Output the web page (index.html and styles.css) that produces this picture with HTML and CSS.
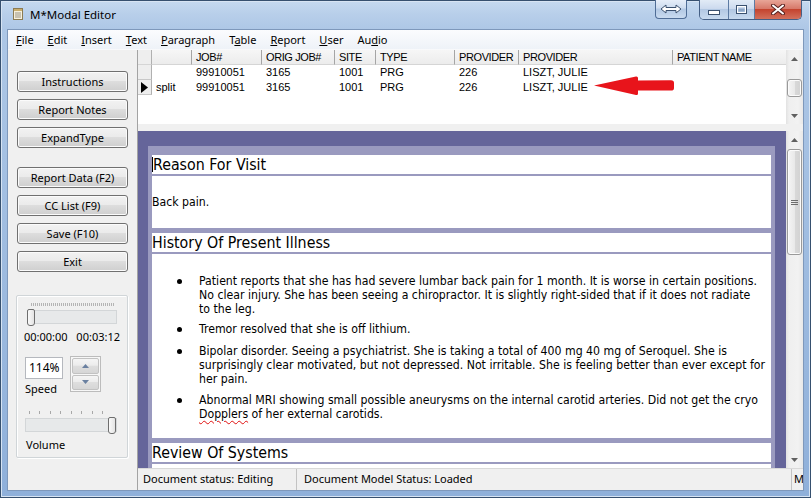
FILE: index.html
```html
<!DOCTYPE html>
<html>
<head>
<meta charset="utf-8">
<title>M*Modal Editor</title>
<link rel="stylesheet" href="styles.css">
</head>
<body>
<div class="window">
  <div class="titlebar">
    <svg class="app-icon" width="10" height="12" viewBox="0 0 10 12">
      <rect x="0.5" y="0.5" width="9" height="11" fill="#f6f0dc" stroke="#8c7b52"/>
      <rect x="1" y="1" width="8" height="2" fill="#c9ae6e"/>
      <path d="M2 5h6M2 7h6M2 9h6" stroke="#9a9486" stroke-width="1"/>
    </svg>
    <span class="title">M*Modal Editor</span>
    <span class="tb-fill"></span>
    <div class="cap-expand">
      <svg width="22" height="10" viewBox="0 0 22 10"><polygon points="1,5 6,1 6,3.5 16,3.5 16,1 21,5 16,9 16,6.5 6,6.5 6,9" fill="#fff" stroke="#3b516f" stroke-width="1"/></svg>
    </div>
    <div class="cap-group">
      <div class="cap cap-min"><svg width="12" height="5" viewBox="0 0 12 5"><rect x="0.5" y="0.5" width="11" height="4" fill="#fff" stroke="#3b516f"/></svg></div>
      <div class="cap cap-max"><svg width="11" height="9" viewBox="0 0 11 9"><rect x="0.5" y="0.5" width="10" height="8" fill="none" stroke="#3b516f"/><rect x="1.5" y="1.5" width="8" height="6" fill="none" stroke="#fff"/><rect x="2.5" y="3.5" width="6" height="3" fill="#8da6c6"/></svg></div>
      <div class="cap cap-close"><svg width="14" height="11" viewBox="0 0 14 11"><path d="M2 1.5L12 9.5M12 1.5L2 9.5" stroke="#5a2320" stroke-width="4" stroke-linecap="round"/><path d="M2 1.5L12 9.5M12 1.5L2 9.5" stroke="#fff" stroke-width="2" stroke-linecap="round"/></svg></div>
    </div>
  </div>

  <div class="client">
    <nav class="menubar">
      <span><u>F</u>ile</span>
      <span><u>E</u>dit</span>
      <span><u>I</u>nsert</span>
      <span><u>T</u>ext</span>
      <span><u>P</u>aragraph</span>
      <span>T<u>a</u>ble</span>
      <span><u>R</u>eport</span>
      <span><u>U</u>ser</span>
      <span>Au<u>d</u>io</span>
    </nav>

    <div class="main">
      <aside class="leftpanel">
        <div class="btn-stack">
          <div class="btn">Instructions</div>
          <div class="btn">Report Notes</div>
          <div class="btn">ExpandType</div>
        </div>
        <div class="btn-stack second">
          <div class="btn">Report Data (F2)</div>
          <div class="btn">CC List (F9)</div>
          <div class="btn">Save (F10)</div>
          <div class="btn">Exit</div>
        </div>
        <div class="group">
          <div class="seek">
            <div class="ticks dense"></div>
            <div class="track"><span class="thumb thumb-left"></span></div>
          </div>
          <div class="times"><span>00:00:00</span><span>00:03:12</span></div>
          <div class="speed-row">
            <div class="speed-col">
              <div class="pct">114%</div>
              <div class="lbl">Speed</div>
            </div>
            <div class="spin">
              <div class="spin-btn"><svg width="7" height="4" viewBox="0 0 7 4"><polygon points="0,4 3.5,0 7,4" fill="#6a80a0"/></svg></div>
              <div class="spin-btn"><svg width="7" height="4" viewBox="0 0 7 4"><polygon points="0,0 7,0 3.5,4" fill="#6a80a0"/></svg></div>
            </div>
          </div>
          <div class="vol">
            <div class="ticks sparse"></div>
            <div class="track"><span class="thumb thumb-right"></span></div>
            <div class="lbl vol-lbl">Volume</div>
          </div>
        </div>
      </aside>

      <section class="rightpane">
        <div class="grid-area">
          <div class="grid">
            <div class="rh hdr"></div>
            <div class="hc"></div>
            <div class="hc">JOB#</div>
            <div class="hc">ORIG JOB#</div>
            <div class="hc">SITE</div>
            <div class="hc">TYPE</div>
            <div class="hc">PROVIDER</div>
            <div class="hc">PROVIDER</div>
            <div class="hc last">PATIENT NAME</div>

            <div class="rh"></div>
            <div class="dc"></div>
            <div class="dc">99910051</div>
            <div class="dc">3165</div>
            <div class="dc">1001</div>
            <div class="dc">PRG</div>
            <div class="dc">226</div>
            <div class="dc">LISZT, JULIE</div>
            <div class="dc"></div>

            <div class="rh cur"><svg width="7" height="11" viewBox="0 0 7 11"><polygon points="0,0 7,5.5 0,11" fill="#000"/></svg></div>
            <div class="dc">split</div>
            <div class="dc">99910051</div>
            <div class="dc">3165</div>
            <div class="dc">1001</div>
            <div class="dc">PRG</div>
            <div class="dc">226</div>
            <div class="dc">LISZT, JULIE</div>
            <div class="dc"></div>
          </div>
          <div class="vscroll vs-grid">
            <div class="sb-btn"><svg width="7" height="4" viewBox="0 0 7 4"><polygon points="0,4 3.5,0 7,4" fill="#606060"/></svg></div>
            <div class="sb-thumb short"></div>
            <div class="sb-fill"></div>
            <div class="sb-btn"><svg width="7" height="4" viewBox="0 0 7 4"><polygon points="0,0 7,0 3.5,4" fill="#606060"/></svg></div>
          </div>
        </div>

        <div class="splitter"></div>

        <div class="doc-area">
          <div class="doc-view">
            <div class="doc-col">
              <div class="sec-head"><span class="caret"></span>Reason For Visit</div>
              <div class="sec-body"><p class="para">Back pain.</p></div>

              <div class="sec-head">History Of Present Illness</div>
              <div class="sec-body list-body">
                <ul class="bullets">
                  <li><span class="li-text">Patient reports that she has had severe lumbar back pain for 1 month. It is worse in certain positions.<br>No clear injury. She has been seeing a chiropractor. It is slightly right-sided that if it does not radiate<br>to the leg.</span></li>
                  <li><span class="li-text">Tremor resolved that she is off lithium.</span></li>
                  <li class="gap8"><span class="li-text">Bipolar disorder. Seeing a psychiatrist. She is taking a total of 400 mg 40 mg of Seroquel. She is<br>surprisingly clear motivated, but not depressed. Not irritable. She is feeling better than ever except for<br>her pain.</span></li>
                  <li><span class="li-text">Abnormal MRI showing small possible aneurysms on the internal carotid arteries. Did not get the cryo<br><span class="spell">Dopplers</span> of her external carotids.</span></li>
                </ul>
              </div>

              <div class="sec-head">Review Of Systems</div>
              <div class="sec-body tail"></div>
            </div>
          </div>
          <div class="vscroll vs-doc">
            <div class="sb-btn"><svg width="7" height="4" viewBox="0 0 7 4"><polygon points="0,4 3.5,0 7,4" fill="#606060"/></svg></div>
            <div class="sb-thumb long"><span class="grip"></span></div>
            <div class="sb-fill"></div>
            <div class="sb-btn"><svg width="7" height="4" viewBox="0 0 7 4"><polygon points="0,0 7,0 3.5,4" fill="#606060"/></svg></div>
          </div>
        </div>

        <div class="statusbar">
          <div class="st st1">Document status: Editing</div>
          <div class="st st2">Document Model Status: Loaded</div>
          <div class="st st3">M</div>
        </div>
      </section>
    </div>
  </div>

  <svg class="red-arrow" width="84" height="24" viewBox="0 0 84 24">
    <path d="M2 11.5 L44 2.5 Q46 2.2 46 4 L46 6.5 L79 6.2 Q82 6.2 82 9 L82 14 Q82 16.6 79 16.6 L46 16.4 L46 19.5 Q46 21.5 44 21 Z" fill="#e8141b"/>
  </svg>
</div>
</body>
</html>
```

FILE: styles.css
```css
* { box-sizing: border-box; }

html, body {
  margin: 0;
  padding: 0;
}

body {
  width: 811px;
  height: 498px;
  overflow: hidden;
  font-family: "Noto Sans", "DejaVu Sans", sans-serif;
  font-size: 11px;
  color: #000;
  background: #fff;
}

/* ---------- window frame ---------- */
.window {
  position: relative;
  width: 811px;
  height: 498px;
  display: flex;
  flex-direction: column;
  padding: 0 8px 8px 8px;
  background: linear-gradient(to bottom, #c6daf0 0px, #b8cfea 14px, #adc7e6 30px, #8fb0da 100%);
  box-shadow: inset 0 0 0 1px #36506f, inset 0 0 0 2px #d7e4f3;
}

.titlebar {
  height: 30px;
  display: flex;
  align-items: flex-start;
  padding-left: 5px;
}

.app-icon {
  margin-top: 8px;
  flex: none;
}

.title {
  margin-left: 7px;
  line-height: 30px;
  font-size: 11.5px;
  color: #000;
  white-space: nowrap;
}

.tb-fill { flex: 1; }

.cap-expand {
  width: 32px;
  height: 19px;
  border: 1px solid #4f6d96;
  border-top: none;
  border-radius: 0 0 4px 4px;
  background: linear-gradient(to bottom, #e6eef9 0%, #cddcef 45%, #b2c8e4 50%, #c9dbf0 100%);
  display: flex;
  align-items: center;
  justify-content: center;
}

.cap-group {
  margin-left: 12px;
  margin-right: 1px;
  height: 20px;
  display: flex;
  border: 1px solid #445f85;
  border-top: none;
  border-radius: 0 0 5px 5px;
  overflow: hidden;
}

.cap {
  height: 100%;
  display: flex;
  align-items: center;
  justify-content: center;
}

.cap-min {
  width: 29px;
  align-items: flex-end;
  padding-bottom: 4px;
  border-right: 1px solid #5d7ba3;
  background: linear-gradient(to bottom, #e2ebf6 0%, #ccdaee 45%, #b3c8e3 50%, #c8daef 100%);
}

.cap-max {
  width: 26px;
  border-right: 1px solid #5d7ba3;
  background: linear-gradient(to bottom, #e2ebf6 0%, #ccdaee 45%, #b3c8e3 50%, #c8daef 100%);
}

.cap-close {
  width: 46px;
  background: linear-gradient(to bottom, #e8a597 0%, #d7796a 45%, #c4442f 50%, #d2705c 100%);
}

/* ---------- client ---------- */
.client {
  flex: 1;
  display: flex;
  flex-direction: column;
  background: #f0f0f0;
  min-height: 0;
  box-shadow: 0 0 0 1px #7e98bb;
}

.menubar {
  height: 20px;
  display: flex;
  gap: 14px;
  padding-left: 8px;
  line-height: 20px;
  font-size: 11px;
  background: linear-gradient(to bottom, #fbfcfe, #eef2f8);
  border-bottom: 1px solid #f8f9fb;
}

.menubar u {
  text-decoration: underline;
  text-underline-offset: 1px;
}

.main {
  flex: 1;
  display: flex;
  min-height: 0;
}

/* ---------- left panel ---------- */
.leftpanel {
  width: 130px;
  flex: none;
  display: flex;
  flex-direction: column;
  padding: 21px 0 0 9px;
  border-right: 1px solid #a3a3a3;
  background: #f0f0f0;
}

.btn-stack {
  display: flex;
  flex-direction: column;
  gap: 7px;
}

.btn-stack.second {
  margin-top: 19px;
}

.btn {
  width: 111px;
  height: 21px;
  border: 1px solid #707070;
  border-radius: 3px;
  background: linear-gradient(to bottom, #f2f2f2 0%, #ebebeb 45%, #dddddd 50%, #cfcfcf 100%);
  box-shadow: inset 0 0 0 1px #fbfbfb;
  text-align: center;
  line-height: 19px;
  font-size: 11px;
  white-space: nowrap;
}

.group {
  margin: 23px 0 0 -1px;
  width: 112px;
  height: 163px;
  border: 1px solid #d0d5d8;
  border-radius: 2px;
  box-shadow: inset 1px 1px 0 #fff, 1px 1px 0 #fff;
}

.seek {
  margin: 7px 0 0 10px;
  width: 90px;
}

.ticks {
  height: 3px;
  margin: 0 3px 0 4px;
}

.ticks.dense {
  background: repeating-linear-gradient(to right, #b4b4b4 0 1px, transparent 1px 2px);
}

.ticks.sparse {
  margin: 0 4px 0 4px;
  background: repeating-linear-gradient(to right, #a8a8a8 0 1px, transparent 1px 10.5px);
}

.track {
  position: relative;
  margin-top: 4px;
  height: 14px;
  background: #e7e9ea;
  border: 1px solid #d3d6d8;
}

.thumb {
  position: absolute;
  top: -2px;
  width: 8px;
  height: 17px;
  border: 1px solid #6e6e6e;
  border-radius: 2px 2px 3px 3px;
  background: linear-gradient(to right, #fafafa, #e3e3e3);
}

.thumb-left { left: -1px; }
.thumb-right { left: 82px; }

.times {
  margin: 6px 0 0 7px;
  width: 96px;
  display: flex;
  justify-content: space-between;
  line-height: 14px;
  font-size: 11px;
}

.speed-row {
  display: flex;
  margin: 12px 0 0 8px;
}

.speed-col {
  margin-top: 1px;
}

.pct {
  width: 38px;
  height: 22px;
  border: 1px solid #b5b8be;
  background: #fff;
  padding-left: 3px;
  line-height: 20px;
  font-size: 12px;
}

.lbl {
  line-height: 14px;
  margin-top: 3px;
  font-size: 11px;
}

.spin {
  margin-left: 7px;
  width: 31px;
  height: 36px;
  display: flex;
  flex-direction: column;
  border: 1px solid #bcbcbc;
  background: #f7f7f7;
  padding: 1px;
  gap: 1px;
}

.spin-btn {
  flex: 1;
  display: flex;
  align-items: center;
  justify-content: center;
  border: 1px solid #c2c2c2;
  border-radius: 2px;
  background: linear-gradient(to bottom, #f5f5f5 0%, #ececec 45%, #dedede 50%, #d6d6d6 100%);
}

.vol {
  margin: 15px 0 0 8px;
  width: 92px;
}

.vol-lbl {
  margin: 6px 0 0 1px;
}

/* ---------- right pane ---------- */
.rightpane {
  flex: 1;
  display: flex;
  flex-direction: column;
  min-width: 0;
}

.grid-area {
  height: 74px;
  display: flex;
  background: #fff;
}

.grid {
  flex: 1;
  display: grid;
  grid-template-columns: 14px 40px 70px 73px 41px 79px 64px 154px 113px;
  grid-auto-rows: 15px;
  align-content: start;
  font-family: "Liberation Sans", Arial, sans-serif;
  font-size: 11px;
  line-height: 15px;
}

.hc {
  background: linear-gradient(to bottom, #f6f6f6, #ececec);
  border-right: 1px solid #a5a5a5;
  border-bottom: 1px solid #d5d5d5;
  padding-left: 4px;
  letter-spacing: -0.4px;
  white-space: nowrap;
  overflow: hidden;
}

.hc.last { border-right: none; }

.rh {
  background: #eeeeee;
  border-right: 1px solid #b0b0b0;
  border-bottom: 1px solid #c8c8c8;
  display: flex;
  align-items: center;
  justify-content: center;
}

.rh.hdr { border-bottom: 1px solid #d5d5d5; }

.dc {
  padding-left: 4px;
  white-space: nowrap;
  overflow: hidden;
}

.vscroll {
  width: 17px;
  flex: none;
  display: flex;
  flex-direction: column;
  background: linear-gradient(to right, #e2e2e2 0, #efefef 3px, #f2f2f2 12px, #e8e8e8 17px);
}

.sb-btn {
  height: 17px;
  flex: none;
  display: flex;
  align-items: center;
  justify-content: center;
}

.sb-fill { flex: 1; }

.sb-thumb {
  margin: 0 1px;
  border: 1px solid #9a9a9a;
  border-radius: 3px;
  background: linear-gradient(to right, #f5f5f5 0%, #e9e9e9 50%, #d9d9d9 51%, #d2d2d2 100%);
  box-shadow: inset 0 0 0 1px #fbfbfb;
  display: flex;
  align-items: center;
  justify-content: center;
}

.sb-thumb.short {
  margin-top: 12px;
  height: 18px;
}

.sb-thumb.long {
  margin-top: 1px;
  height: 106px;
}

.grip {
  width: 7px;
  height: 5px;
  background: repeating-linear-gradient(to bottom, #6d6d6d 0 1px, transparent 1px 2px);
}

.splitter {
  height: 7px;
  background: #f0f0f0;
}

.doc-area {
  height: 337px;
  display: flex;
}

.doc-view {
  flex: 1;
  min-width: 0;
  background: #65659a;
  padding: 15px 11px 0 10px;
  overflow: hidden;
}

.doc-col {
  background: #9a9abf;
  padding: 9px 4px 0 4px;
  font-family: "DejaVu Sans Condensed", "DejaVu Sans", sans-serif;
  color: #000;
}

.sec-head {
  background: #fff;
  height: 19px;
  line-height: 19px;
  font-size: 15.8px;
  margin-bottom: 2px;
  white-space: nowrap;
  display: flex;
  align-items: center;
}

.caret {
  width: 1px;
  height: 15px;
  background: #000;
  flex: none;
}

.sec-body {
  background: #fff;
  margin-bottom: 5px;
  font-size: 12.2px;
  line-height: 14px;
}

.para {
  margin: 0;
  padding: 19px 0;
}

.list-body {
  padding: 20px 0 18px 0;
  height: 184px;
}

.bullets {
  list-style: none;
  margin: 0;
  padding: 0;
}

.bullets li {
  display: flex;
  white-space: nowrap;
}

.li-text {
  display: block;
}

.bullets li + li { margin-top: 6px; }
.bullets li.gap8 { margin-top: 8px; }
.bullets li:last-child { margin-top: 7px; }

.bullets li::before {
  content: "";
  flex: none;
  width: 5px;
  height: 5px;
  border-radius: 50%;
  background: #000;
  margin: 5px 17px 0 25px;
}

.spell {
  text-decoration: underline wavy #e01010;
  text-decoration-thickness: 1px;
  text-underline-offset: 2px;
}

.sec-body.tail {
  height: 60px;
}

/* ---------- status bar ---------- */
.statusbar {
  height: 22px;
  display: flex;
  background: #f0f0f0;
  border-top: 1px solid #d9d9d9;
  font-size: 11px;
  line-height: 20px;
}

.st {
  white-space: nowrap;
  overflow: hidden;
}

.st1 {
  width: 159px;
  padding-left: 5px;
  border-right: 1px solid #c3c3c3;
}

.st2 {
  flex: 1;
  padding-left: 7px;
  border-right: 1px solid #c3c3c3;
}

.st3 {
  width: 11px;
  padding-left: 2px;
}

/* ---------- annotation overlay ---------- */
.red-arrow {
  position: absolute;
  left: 592px;
  top: 74px;
}
```
